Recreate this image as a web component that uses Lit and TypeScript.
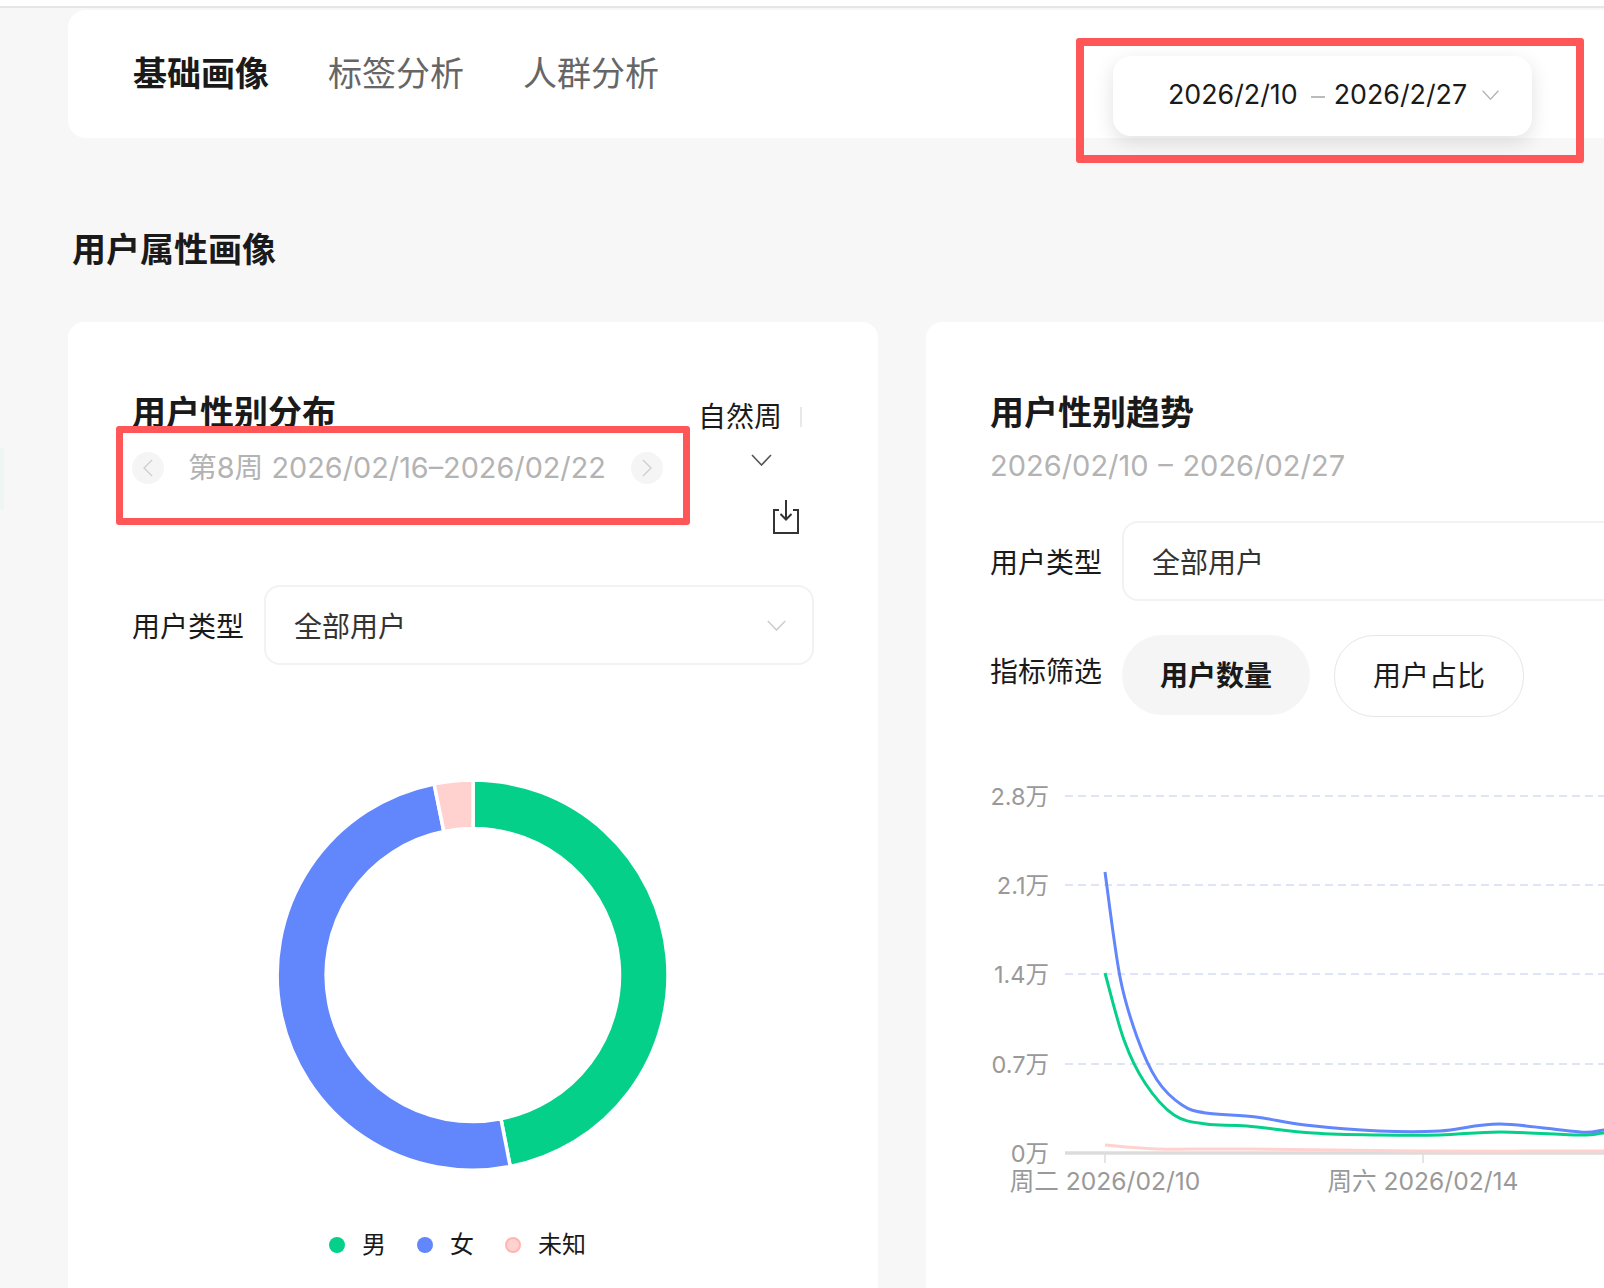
import { LitElement, html, css, svg } from "lit";
import { customElement } from "lit/decorators.js";

type P = [number, number];

const BLUE: P[] = [[1105,872],[1120,977],[1137,1037],[1157,1080],[1182,1105],[1206,1113],[1256,1117],[1305,1125],[1379,1131],[1440,1131],[1500,1124],[1580,1132],[1604,1130],[1640,1128]];
const GREEN: P[] = [[1105,973],[1124,1040],[1145,1083],[1174,1115],[1206,1124],[1247,1126],[1313,1133],[1379,1135],[1440,1135],[1500,1132],[1580,1135],[1604,1133],[1640,1132]];
const PINK: P[] = [[1105,1145],[1157,1149],[1247,1149],[1423,1151],[1640,1151]];

function smooth(p: P[]): string {
  let d = `M${p[0][0]} ${p[0][1]}`;
  for (let i = 0; i < p.length - 1; i++) {
    const a = p[Math.max(i - 1, 0)], b = p[i], c = p[i + 1], e = p[Math.min(i + 2, p.length - 1)];
    const c1x = b[0] + (c[0] - a[0]) / 6, c1y = b[1] + (c[1] - a[1]) / 6;
    const c2x = c[0] - (e[0] - b[0]) / 6, c2y = c[1] - (e[1] - b[1]) / 6;
    d += ` C${c1x.toFixed(1)} ${c1y.toFixed(1)} ${c2x.toFixed(1)} ${c2y.toFixed(1)} ${c[0]} ${c[1]}`;
  }
  return d;
}

function arc(from: number, to: number, R = 195, r = 146.5, cx = 200, cy = 200): string {
  const pt = (rad: number, deg: number) => {
    const t = (deg * Math.PI) / 180;
    return `${(cx + rad * Math.sin(t)).toFixed(2)} ${(cy - rad * Math.cos(t)).toFixed(2)}`;
  };
  const large = to - from > 180 ? 1 : 0;
  return `M${pt(R, from)} A${R} ${R} 0 ${large} 1 ${pt(R, to)} L${pt(r, to)} A${r} ${r} 0 ${large} 0 ${pt(r, from)} Z`;
}

const chevron = (cls: string) => html`<svg class=${cls} viewBox="0 0 21 12" fill="none"><path d="M1 1l9.5 10L20 1" stroke="currentColor" stroke-width="1.6"/></svg>`;

@customElement("app-root")
export class AppRoot extends LitElement {
  static styles = css`
    :host {
      display: block;
      position: relative;
      width: 1604px;
      height: 1288px;
      overflow: hidden;
      background: #f7f7f7;
      font-family: Inter, "Noto Sans CJK SC", sans-serif;
      color: #1a1a1a;
    }
    .topbar { height: 6px; background: #fff; border-bottom: 2px solid #e6e6e6; }
    .main { padding: 2px 0 0 68px; width: 1700px; box-sizing: border-box; }
    .header {
      display: flex;
      height: 128px;
      width: 1536px;
      box-sizing: border-box;
      background: #fff;
      border-radius: 18px 0 0 18px;
      padding-left: 65px;
      align-items: center;
    }
    .tabs { display: flex; gap: 59px; font-size: 34px; line-height: 40px; color: #666; }
    .tabs .active { font-weight: 700; color: #1a1a1a; }
    .range {
      margin-left: auto;
      margin-right: 72px;
      align-self: flex-end;
      margin-bottom: 2px;
      width: 419px;
      height: 80px;
      box-sizing: border-box;
      padding-left: 55px;
      border-radius: 18px;
      background: #fff;
      box-shadow: 0 6px 20px rgba(0, 0, 0, 0.12);
      display: flex;
      align-items: center;
      font-size: 26.8px;
      color: #1a1a1a;
    }
    .range .txt { padding-bottom: 4px; }
    .range .dash { width: 14px; height: 2px; background: #bbb; margin: 2px 9px 0 13px; }
    .range svg { width: 19px; height: 10px; margin: 0 0 3px 14px; color: #b3b3b3; }
    .section { margin: 92px 0 52px 4px; font-size: 34px; line-height: 40px; font-weight: 700; }
    .cards { display: grid; grid-template-columns: 810px 810px; gap: 48px; }
    .card {
      background: #fff;
      border-radius: 16px;
      padding: 71px 64px 0 64px;
      height: 1000px;
      box-sizing: border-box;
    }
    .title { font-size: 34px; line-height: 40px; font-weight: 700; }
    .head { display: flex; justify-content: space-between; align-items: flex-start; }
    .week { display: flex; align-items: center; margin-top: 12px; font-size: 28.8px; color: #b3b3b3; }
    .circle {
      width: 32px; height: 32px; border-radius: 50%; background: #f5f5f5;
      display: flex; align-items: center; justify-content: center; color: #ccc;
    }
    .circle svg { width: 10px; height: 18px; }
    .week .label { margin: 0 25px 0 24px; padding-bottom: 4px; width: 418px; white-space: nowrap; }
    .tools { display: flex; flex-direction: column; align-items: flex-end; margin-right: 12px; }
    .mode { display: flex; align-items: center; margin-top: 6px; font-size: 28px; line-height: 36px; height: 36px; }
    .mode .sep { width: 2px; height: 20px; background: #e8e8e8; margin-left: 18px; }
    .tools .more { width: 21px; height: 12px; margin: 19px 30px 0 0; color: #555; }
    .tools .dl { width: 26px; height: 34px; margin: 34px 3px 0 0; }
    .filter { display: flex; align-items: center; gap: 22px; font-size: 28px; }
    .filter .name { width: 110px; white-space: nowrap; }
    .select {
      flex: 1;
      height: 80px;
      box-sizing: border-box;
      border: 2px solid #f2f2f2;
      border-radius: 16px;
      padding: 0 25px 0 28px;
      display: flex;
      align-items: center;
      justify-content: space-between;
      color: #333;
    }
    .select svg { width: 21px; height: 11px; color: #ccc; }
    .left .filter { margin-top: 51px; }
    .donut { display: block; width: 400px; height: 400px; margin: 110px auto 0; }
    .legend {
      display: flex; justify-content: center; gap: 31px; margin-top: 53px;
      padding-right: 31px; font-size: 24px; line-height: 34px;
    }
    .legend .item { display: flex; align-items: center; gap: 17px; }
    .dot { width: 16px; height: 16px; border-radius: 50%; box-sizing: border-box; }
    .dot.m { background: #05d08a; }
    .dot.f { background: #6286fb; }
    .dot.u { background: #ffd2d0; border: 2px solid #ffb5b1; }
    .sub { margin-top: 13px; font-size: 29px; line-height: 40px; color: #b3b3b3; word-spacing: 1.5px; }
    .right .filter.first { margin-top: 35px; }
    .metric { margin-top: 34px; align-items: flex-start; gap: 22px; }
    .metric .name { margin-top: 15px; }
    .chips { display: flex; gap: 24px; }
    .chip {
      width: 188px; height: 80px; box-sizing: border-box; border-radius: 40px; padding-bottom: 3px;
      display: flex; align-items: center; justify-content: center; font-size: 28px;
    }
    .chip.on { background: #f5f5f5; font-weight: 700; }
    .chip.off { border: 1.5px solid #e6e6e6; height: 82px; width: 190px; padding-bottom: 5px; }
    .chart { display: block; width: 745px; height: 520px; margin-top: 63px; }
    .chart text { font-family: Inter, "Noto Sans CJK SC", sans-serif; font-size: 23.5px; fill: #999; dominant-baseline: central; }
    .chart .x { font-size: 24.6px; text-anchor: middle; }
    .chart .y { text-anchor: end; }
    .mark {
      position: absolute; box-sizing: border-box;
      border: 8px solid #ff5757; border-radius: 3px; pointer-events: none;
    }
    .mark.a { left: 1076px; top: 38px; width: 508px; height: 125px; }
    .mark.b { left: 116px; top: 426px; width: 574px; height: 99px; border-width: 7px; }
    .nub {
      position: absolute; left: 0; top: 447px; width: 4px; height: 63px;
      background: #edf6f3; border-radius: 0 6px 6px 0;
    }
    .wm {
      position: absolute; inset: 0; pointer-events: none;
      display: grid; grid-template-columns: repeat(4, 430.5px); grid-auto-rows: 93.33px;
      padding: 80px 0 0 173px; overflow: hidden;
      font-size: 27px; line-height: 28px; font-weight: 300; color: rgba(0, 0, 0, 0.014); white-space: nowrap;
    }
  `;

  render() {
    const ys: [string, number][] = [["2.8万", 796], ["2.1万", 885], ["1.4万", 974], ["0.7万", 1064]];
    return html`
      <div class="topbar"></div>
      <div class="main">
        <div class="header">
          <div class="tabs">
            <span class="active">基础画像</span><span>标签分析</span><span>人群分析</span>
          </div>
          <div class="range">
            <span class="txt">2026/2/10</span><span class="dash"></span><span class="txt">2026/2/27</span>${chevron("")}
          </div>
        </div>
        <div class="section">用户属性画像</div>
        <div class="cards">
          <div class="card left">
            <div class="head">
              <div>
                <div class="title">用户性别分布</div>
                <div class="week">
                  <span class="circle"><svg viewBox="0 0 10 18" fill="none"><path d="M9 1L1 9l8 8" stroke="currentColor" stroke-width="1.2"/></svg></span>
                  <span class="label">第8周 2026/02/16–2026/02/22</span>
                  <span class="circle"><svg viewBox="0 0 10 18" fill="none"><path d="M1 1l8 8-8 8" stroke="currentColor" stroke-width="1.2"/></svg></span>
                </div>
              </div>
              <div class="tools">
                <div class="mode"><span>自然周</span><span class="sep"></span></div>
                ${chevron("more")}
                <svg class="dl" viewBox="0 0 26 34" fill="none" stroke="#333" stroke-width="2">
                  <path d="M6 10H1v23h24V10h-5"/>
                  <path d="M13 0v19M7.5 14l5.5 5.5 5.5-5.5" />
                </svg>
              </div>
            </div>
            <div class="filter">
              <span class="name">用户类型</span>
              <div class="select"><span>全部用户</span>${chevron("")}</div>
            </div>
            <svg class="donut" viewBox="0 0 400 400">
              <path d=${arc(0, 169)} fill="#05d08a" stroke="#fff" stroke-width="3.5" />
              <path d=${arc(169, 348.5)} fill="#6286fb" stroke="#fff" stroke-width="3.5" />
              <path d=${arc(348.5, 360)} fill="#ffd2d0" stroke="#fff" stroke-width="3.5" />
            </svg>
            <div class="legend">
              <span class="item"><span class="dot m"></span>男</span>
              <span class="item"><span class="dot f"></span>女</span>
              <span class="item"><span class="dot u"></span>未知</span>
            </div>
          </div>
          <div class="card right">
            <div class="title">用户性别趋势</div>
            <div class="sub">2026/02/10 – 2026/02/27</div>
            <div class="filter first">
              <span class="name">用户类型</span>
              <div class="select"><span>全部用户</span>${chevron("")}</div>
            </div>
            <div class="filter metric">
              <span class="name">指标筛选</span>
              <div class="chips">
                <span class="chip on">用户数量</span>
                <span class="chip off">用户占比</span>
              </div>
            </div>
            <svg class="chart" viewBox="990 780 745 520">
              ${ys.map(([t, y]) => svg`
                <line x1="1065" x2="1736" y1=${y} y2=${y} stroke="#dfe5f7" stroke-width="2" stroke-dasharray="8 5" />
                <text class="y" x="1049" y=${y}>${t}</text>
              `)}
              <text class="y" x="1049" y="1153">0万</text>
              <line x1="1065" x2="1736" y1="1153" y2="1153" stroke="#dcdcdc" stroke-width="3.5" />
              <line x1="1105" x2="1105" y1="1153" y2="1163" stroke="#dcdcdc" stroke-width="1.5" />
              <line x1="1423" x2="1423" y1="1153" y2="1163" stroke="#dcdcdc" stroke-width="1.5" />
              <text class="x" x="1105" y="1181">周二 2026/02/10</text>
              <text class="x" x="1423" y="1181">周六 2026/02/14</text>
              <path d=${smooth(PINK)} fill="none" stroke="#ffd2d0" stroke-width="3" />
              <path d=${smooth(GREEN)} fill="none" stroke="#05d08a" stroke-width="3" />
              <path d=${smooth(BLUE)} fill="none" stroke="#6286fb" stroke-width="3" />
            </svg>
          </div>
        </div>
      </div>
      <div class="nub"></div>
      <div class="wm">${Array.from({ length: 56 }, () => html`<span>FDBqBXPNRLN</span>`)}</div>
      <div class="mark a"></div>
      <div class="mark b"></div>
    `;
  }
}
